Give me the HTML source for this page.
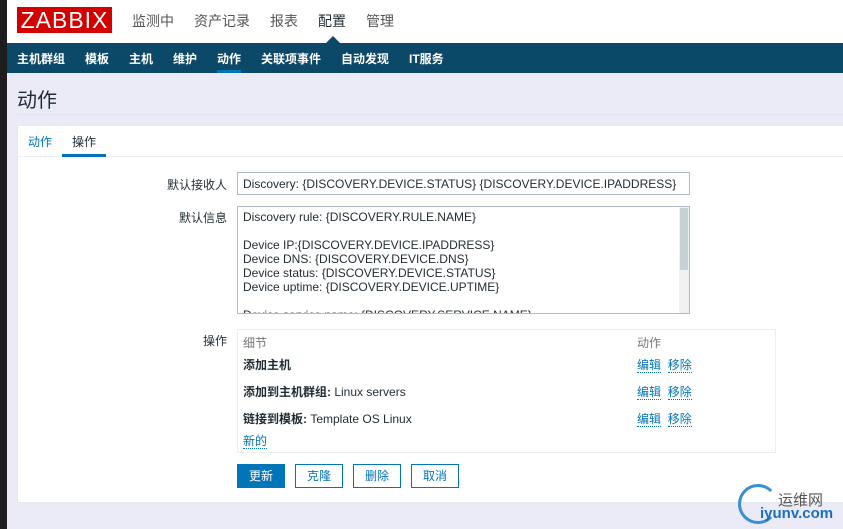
<!DOCTYPE html>
<html><head><meta charset="utf-8"><style>
*{margin:0;padding:0;box-sizing:border-box}
body{width:843px;height:529px;overflow:hidden;background:#ebebf7;font-family:"Liberation Sans","Noto Sans CJK SC",sans-serif;font-size:12px;color:#1f2c33;position:relative}
.a{position:absolute}
.strip{left:0;top:0;width:7px;height:529px;background:#1e1e1e}
.hdr{left:7px;top:0;right:0;height:43px;background:#fff}
.logo{left:17px;top:7px;width:95px;height:26px;background:#d40000;color:#fff;font-size:23px;line-height:26px;text-align:center;letter-spacing:1px}
.top{top:11px;font-size:14px;color:#555}
.nav{left:7px;top:43px;right:0;height:30px;background:#0c4868}
.nv{top:50px;color:#fff;font-size:12px;font-weight:bold}
.lnk{color:#0275b8;border-bottom:1px dotted #0275b8}
.lbl{right:616px;text-align:right;font-size:12px}
.btn{top:464px;height:24px;border:1px solid #0275b8;color:#0275b8;text-align:center;line-height:22px;background:#fff}
.mono{font-size:12px;line-height:14px}
</style></head><body>
<div class="a strip"></div>
<div class="a hdr"></div>
<div class="a logo">ZABBIX</div>
<div class="a top" style="left:132px">监测中</div>
<div class="a top" style="left:194px">资产记录</div>
<div class="a top" style="left:270px">报表</div>
<div class="a top" style="left:318px;color:#1f2c33">配置</div>
<div class="a top" style="left:366px">管理</div>
<div class="a nav"></div>
<div class="a" style="left:326px;top:36px;width:0;height:0;border-left:7px solid transparent;border-right:7px solid transparent;border-bottom:7px solid #0c4868"></div>
<div class="a nv" style="left:17px">主机群组</div>
<div class="a nv" style="left:85px">模板</div>
<div class="a nv" style="left:129px">主机</div>
<div class="a nv" style="left:173px">维护</div>
<div class="a nv" style="left:217px">动作</div>
<div class="a" style="left:217px;top:70px;width:24px;height:3px;background:#0275b8"></div>
<div class="a nv" style="left:261px">关联项事件</div>
<div class="a nv" style="left:341px">自动发现</div>
<div class="a nv" style="left:409px">IT服务</div>
<div class="a" style="left:17px;top:84px;font-size:20px">动作</div>
<div class="a" style="left:17px;top:114px;right:0;height:1px;background:#dde4ee"></div>
<div class="a" style="left:17px;top:125px;right:0;height:378px;background:#fff;border:1px solid #e4e9f0;border-right:none"></div>
<div class="a" style="left:18px;top:156px;right:0;height:1px;background:#ebeef3"></div>
<div class="a lbl" style="left:28px;top:133px;color:#0275b8;right:auto">动作</div>
<div class="a" style="left:72px;top:133px">操作</div>
<div class="a" style="left:62px;top:154px;width:44px;height:3px;background:#0275b8"></div>
<div class="a lbl" style="top:176px">默认接收人</div>
<div class="a lbl" style="top:209px">默认信息</div>
<div class="a lbl" style="top:332px">操作</div>
<div class="a" style="left:237px;top:172px;width:453px;height:23px;border:1px solid #acbbc7;padding:4px 5px" ><span class="mono">Discovery: {DISCOVERY.DEVICE.STATUS} {DISCOVERY.DEVICE.IPADDRESS}</span></div>
<div class="a" style="left:237px;top:206px;width:453px;height:108px;border:1px solid #acbbc7;overflow:hidden;padding:3px 5px">
<div class="mono">Discovery rule: {DISCOVERY.RULE.NAME}<br><br>Device IP:{DISCOVERY.DEVICE.IPADDRESS}<br>Device DNS: {DISCOVERY.DEVICE.DNS}<br>Device status: {DISCOVERY.DEVICE.STATUS}<br>Device uptime: {DISCOVERY.DEVICE.UPTIME}<br><br>Device service name: {DISCOVERY.SERVICE.NAME}</div>
<div class="a" style="right:0;top:0;width:10px;height:106px;background:#f0f0f0"></div>
<div class="a" style="right:1px;top:1px;width:8px;height:62px;background:#c5d2d5"></div>
</div>
<div class="a" style="left:237px;top:329px;width:539px;height:124px;border:1px solid #ebeef5"></div>
<div class="a" style="left:243px;top:334px;color:#777">细节</div>
<div class="a" style="left:637px;top:334px;color:#777">动作</div>
<div class="a" style="left:243px;top:356px;font-weight:bold">添加主机</div>
<div class="a" style="left:243px;top:383px"><b>添加到主机群组:</b> Linux servers</div>
<div class="a" style="left:243px;top:410px"><b>链接到模板:</b> Template OS Linux</div>
<div class="a" style="left:637px;top:356px"><span class="lnk">编辑</span>&nbsp; <span class="lnk">移除</span></div>
<div class="a" style="left:637px;top:383px"><span class="lnk">编辑</span>&nbsp; <span class="lnk">移除</span></div>
<div class="a" style="left:637px;top:410px"><span class="lnk">编辑</span>&nbsp; <span class="lnk">移除</span></div>
<div class="a" style="left:243px;top:432px"><span class="lnk">新的</span></div>
<div class="a btn" style="left:237px;width:48px;background:#0275b8;color:#fff">更新</div>
<div class="a btn" style="left:295px;width:48px">克隆</div>
<div class="a btn" style="left:353px;width:48px">删除</div>
<div class="a btn" style="left:411px;width:48px">取消</div>
<div class="a" style="left:738px;top:484px;width:40px;height:40px;border:3px solid #3a8fd0;border-radius:50%;border-right-color:transparent"></div>
<div class="a" style="left:778px;top:489px;font-size:15px;color:#555">运维网</div>
<div class="a" style="left:760px;top:505px;font-size:15px;color:#1a6fbf;font-weight:bold">iyunv.com</div>
</body></html>
